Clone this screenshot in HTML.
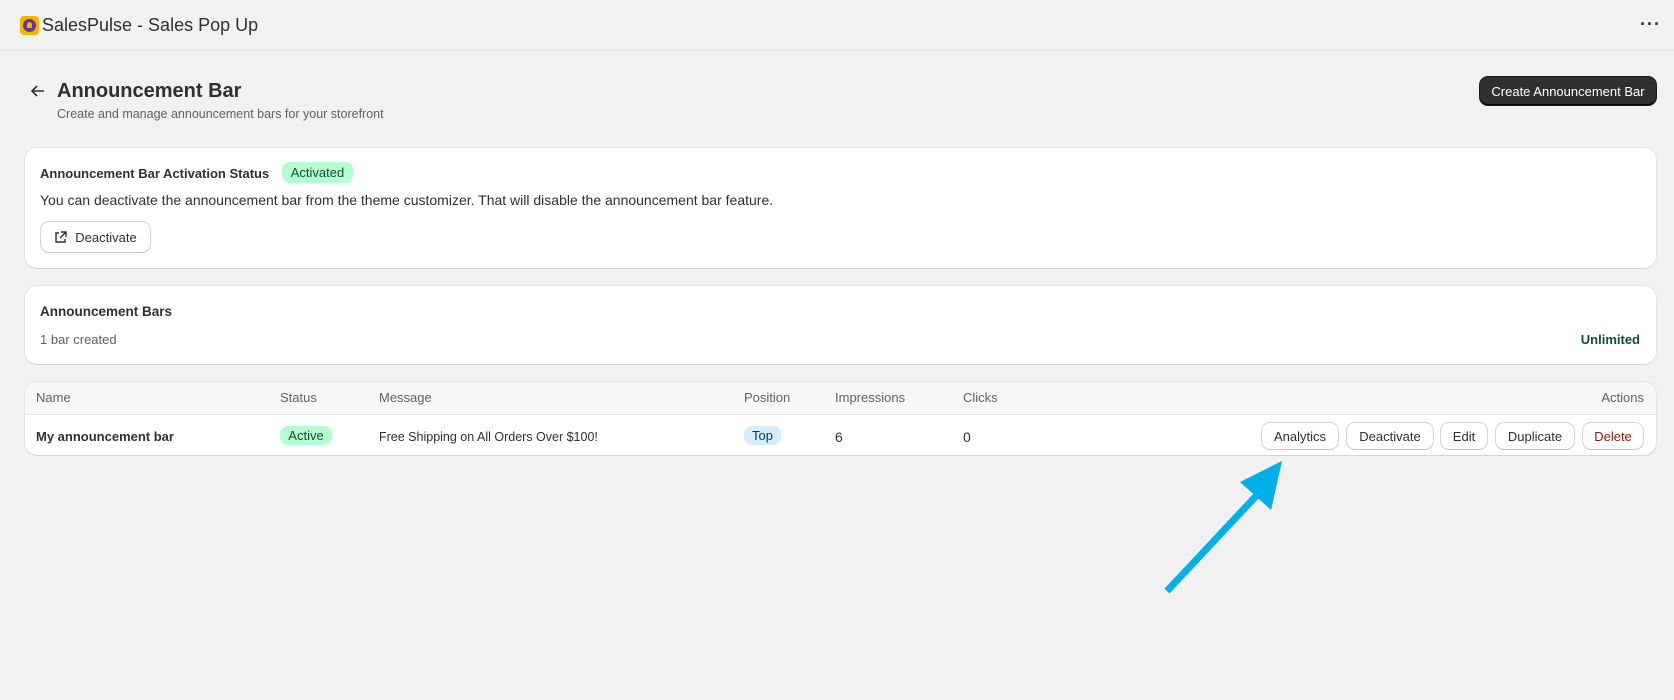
<!DOCTYPE html>
<html><head><meta charset="utf-8"><style>
*{box-sizing:border-box;margin:0;padding:0}
body{width:1674px;height:700px;background:#f1f1f1;font-family:"Liberation Sans",sans-serif;color:#303030;position:relative;overflow:hidden;font-size:13px}
.a{position:absolute}
.card{position:absolute;background:#fff;border-radius:12px;box-shadow:0 1px 0 #d4d4d4,0 0 0 1px #e3e3e3}
.btn{position:absolute;background:#fff;border-radius:8px;box-shadow:0 1px 0 #c8c8c8,0 0 0 1px #d6d6d6;font-size:13px;color:#303030;display:flex;align-items:center;justify-content:center}
.badge{position:absolute;border-radius:8px;font-size:13px;display:flex;align-items:center;justify-content:center}
.th{position:absolute;top:390px;font-size:13px;color:#616161}
.td{position:absolute;top:429px;font-size:13px;color:#303030}
</style></head><body>
<div class="a" style="left:0;top:0;width:1674px;height:51px;border-bottom:1px solid #e3e3e3"></div>
<div class="a" style="left:20px;top:16px;width:19px;height:19px;background:#f5b400;border-radius:4px"></div>
<div class="a" style="left:23px;top:19px;width:13px;height:13px;background:#6b2fa0;border-radius:50%"></div>
<div class="a" style="left:27px;top:22px;width:5px;height:6px;background:#f5b400;border-radius:3px 3px 1px 1px"></div>
<div class="a" style="left:42px;top:15px;font-size:18px;color:#303030">SalesPulse - Sales Pop Up</div>
<div class="a" style="left:1640px;top:14px;font-size:18px;font-weight:bold;letter-spacing:1px">···</div>

<svg class="a" style="left:30px;top:84px" width="16" height="14" viewBox="0 0 16 14"><path d="M14 7H2M7 2L2 7l5 5" stroke="#303030" stroke-width="1.6" fill="none"/></svg>
<div class="a" style="left:57px;top:80px;font-size:20px;font-weight:bold;color:#303030">Announcement Bar</div>
<div class="a" style="left:57px;top:107px;font-size:12.5px;color:#616161">Create and manage announcement bars for your storefront</div>
<div class="a" style="left:1480px;top:77px;width:176px;height:28px;background:#303030;border-radius:8px;box-shadow:inset 0 -1px 0 #000,0 0 0 1px #1a1a1a;color:#fff;font-size:13px;display:flex;align-items:center;justify-content:center">Create Announcement Bar</div>

<div class="card" style="left:25px;top:148px;width:1631px;height:120px"></div>
<div class="a" style="left:40px;top:166px;font-size:13px;font-weight:bold">Announcement Bar Activation Status</div>
<div class="badge" style="left:282px;top:162px;width:71px;height:21px;background:#b4fed2;color:#0c5132">Activated</div>
<div class="a" style="left:40px;top:192px;font-size:14px">You can deactivate the announcement bar from the theme customizer. That will disable the announcement bar feature.</div>
<div class="btn" style="left:41px;top:222px;width:109px;height:30px"><svg width="13" height="13" viewBox="0 0 13 13" style="margin-right:8px"><path d="M5 2H2v9h9V8M7 1h5v5M12 1L6 7" stroke="#303030" stroke-width="1.4" fill="none"/></svg>Deactivate</div>

<div class="card" style="left:25px;top:286px;width:1631px;height:78px"></div>
<div class="a" style="left:40px;top:304px;font-size:13.5px;font-weight:bold">Announcement Bars</div>
<div class="a" style="left:40px;top:332px;font-size:13px;color:#616161">1 bar created</div>
<div class="a" style="left:1540px;top:332px;width:100px;text-align:right;font-size:13px;font-weight:bold;color:#0c5132">Unlimited</div>

<div class="card" style="left:25px;top:382px;width:1631px;height:73px;overflow:hidden"><div style="height:33px;background:#f7f7f7;border-bottom:1px solid #e3e3e3"></div></div>
<div class="th" style="left:36px">Name</div>
<div class="th" style="left:280px">Status</div>
<div class="th" style="left:379px">Message</div>
<div class="th" style="left:744px">Position</div>
<div class="th" style="left:835px">Impressions</div>
<div class="th" style="left:963px">Clicks</div>
<div class="th" style="left:1544px;width:100px;text-align:right">Actions</div>
<div class="td" style="left:36px;font-weight:bold;font-size:13px">My announcement bar</div>
<div class="badge" style="left:280px;top:426px;width:52px;height:19px;background:#b4fed2;color:#0c5132">Active</div>
<div class="td" style="left:379px;font-size:12.5px;top:430px">Free Shipping on All Orders Over $100!</div>
<div class="badge" style="left:744px;top:426px;width:37px;height:19px;background:#d5ebff;color:#003a5a">Top</div>
<div class="td" style="left:835px;font-size:14px">6</div>
<div class="td" style="left:963px;font-size:14px">0</div>
<div class="btn" style="left:1262px;top:423px;width:76px;height:26px">Analytics</div>
<div class="btn" style="left:1347px;top:423px;width:86px;height:26px">Deactivate</div>
<div class="btn" style="left:1441px;top:423px;width:46px;height:26px">Edit</div>
<div class="btn" style="left:1496px;top:423px;width:78px;height:26px">Duplicate</div>
<div class="btn" style="left:1583px;top:423px;width:60px;height:26px;color:#8e1f0b">Delete</div>

<svg class="a" style="left:0;top:0" width="1674" height="700"><path d="M1167 591L1257 495" stroke="#00b0ea" stroke-width="7" fill="none"/><path d="M1282 461L1271 510L1240 482Z" fill="#00b0ea"/></svg>
</body></html>
